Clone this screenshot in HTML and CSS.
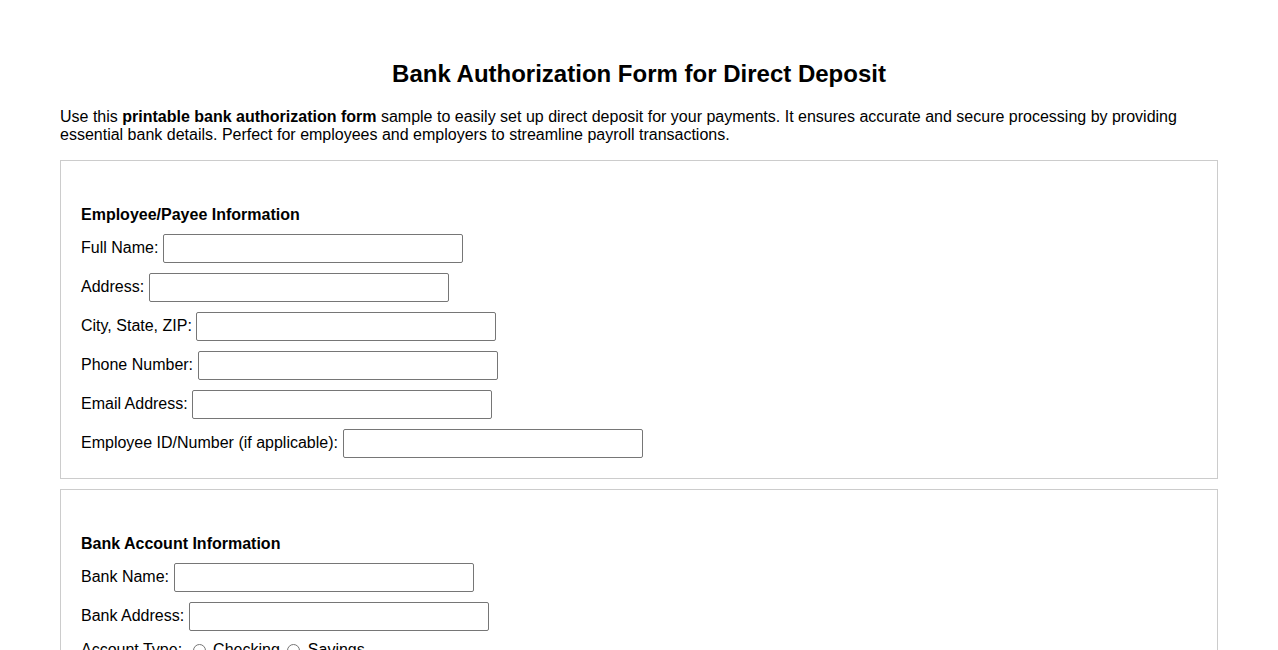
FILE: index.html
```html
<!DOCTYPE html>
<html lang="en">
<head>
<meta charset="utf-8">
<title>Bank Authorization Form for Direct Deposit</title>
<link rel="stylesheet" href="styles.css">
</head>
<body>
<main class="page">
  <h1 class="title">Bank Authorization Form for Direct Deposit</h1>
  <p class="intro">Use this <strong>printable bank authorization form</strong> sample to easily set up direct deposit for your payments. It ensures accurate and secure processing by providing essential bank details. Perfect for employees and employers to streamline payroll transactions.</p>

  <form class="form">
    <section class="block">
      <h3 class="block-title">Employee/Payee Information</h3>
      <div class="row"><label class="field-label" for="fullname">Full Name:</label><input id="fullname" type="text"></div>
      <div class="row"><label class="field-label" for="address">Address:</label><input id="address" type="text"></div>
      <div class="row"><label class="field-label" for="city">City, State, ZIP:</label><input id="city" type="text"></div>
      <div class="row"><label class="field-label" for="phone">Phone Number:</label><input id="phone" type="text"></div>
      <div class="row"><label class="field-label" for="email">Email Address:</label><input id="email" type="text"></div>
      <div class="row"><label class="field-label" for="empid">Employee ID/Number (if applicable):</label><input id="empid" type="text"></div>
    </section>

    <section class="block">
      <h3 class="block-title">Bank Account Information</h3>
      <div class="row"><label class="field-label" for="bankname">Bank Name:</label><input id="bankname" type="text"></div>
      <div class="row"><label class="field-label" for="bankaddr">Bank Address:</label><input id="bankaddr" type="text"></div>
      <div class="row row-choices">
        <span class="type-label">Account Type:</span>
        <label class="choice"><input type="radio" name="acct">Checking</label>
        <label class="choice"><input type="radio" name="acct">Savings</label>
      </div>
      <div class="row"><label class="field-label" for="routing">Routing Number:</label><input id="routing" type="text"></div>
      <div class="row"><label class="field-label" for="account">Account Number:</label><input id="account" type="text"></div>
    </section>
  </form>
</main>
</body>
</html>
```

FILE: styles.css
```css
html, body {
  margin: 0;
  padding: 0;
  background: #fff;
}

body {
  font-family: "Liberation Sans", Arial, sans-serif;
  font-size: 16px;
  color: #000;
}

.page {
  padding: 40px 60px;
}

.title {
  font-size: 24px;
  font-weight: bold;
  text-align: center;
  margin: 20px 0 20px;
  line-height: 28px;
}

.intro {
  margin: 0 0 16px;
  line-height: 18px;
}

.block {
  border: 1px solid #ccc;
  padding: 20px;
  margin-bottom: 10px;
}

.block-title {
  font-size: 16px;
  font-weight: bold;
  margin: 25px 0 10px;
  line-height: 18px;
}

.row {
  display: flex;
  align-items: flex-start;
  gap: 4.5px;
  margin-bottom: 10px;
}

.row:last-child {
  margin-bottom: 0;
}

.field-label {
  line-height: 18px;
  padding-top: 5px;
}

.row input[type="text"] {
  box-sizing: border-box;
  width: 300px;
  height: 29px;
  padding: 4px 6px;
  border: 1px solid #767676;
  border-radius: 2px;
  font: inherit;
}

/* radio group: label, then two radio + caption pairs on one text line */
.row-choices {
  gap: 5px;
  line-height: 18px;
}

.type-label {
  margin-right: 6px;
}

.choice {
  display: flex;
  align-items: center;
}

.choice + .choice {
  margin-left: 2px;
}

.choice input {
  width: 13px;
  height: 13px;
  margin: 0 7px 0 0;
}

.choice + .choice input {
  margin-right: 8px;
}
```
